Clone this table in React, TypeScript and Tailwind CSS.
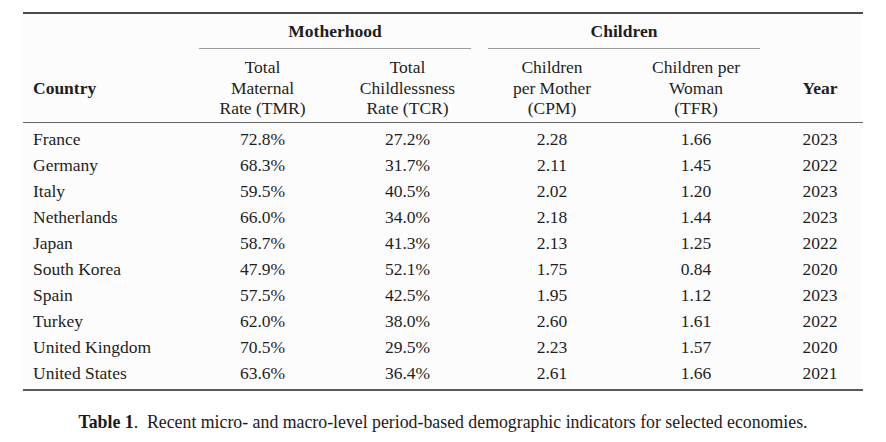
const rows: [string, string, string, string, string, string][] = [
  ['France', '72.8%', '27.2%', '2.28', '1.66', '2023'],
  ['Germany', '68.3%', '31.7%', '2.11', '1.45', '2022'],
  ['Italy', '59.5%', '40.5%', '2.02', '1.20', '2023'],
  ['Netherlands', '66.0%', '34.0%', '2.18', '1.44', '2023'],
  ['Japan', '58.7%', '41.3%', '2.13', '1.25', '2022'],
  ['South Korea', '47.9%', '52.1%', '1.75', '0.84', '2020'],
  ['Spain', '57.5%', '42.5%', '1.95', '1.12', '2023'],
  ['Turkey', '62.0%', '38.0%', '2.60', '1.61', '2022'],
  ['United Kingdom', '70.5%', '29.5%', '2.23', '1.57', '2020'],
  ['United States', '63.6%', '36.4%', '2.61', '1.66', '2021'],
]

// column widths: country | TMR | TCR | CPM | TFR | year
const cols = 'grid grid-cols-[167px_145px_145px_144px_144px_98px]'

export default function App() {
  return (
    <div className="w-[886px] h-[442px] bg-white text-[#1e1e1e] [font-family:'Liberation_Serif',serif] overflow-hidden">
      <div className="pt-[12px] px-[20px]">
        {/* table */}
        <div className="mx-[3px] bg-[#fcfcfc] border-t-2 border-b-2 border-t-[#4a4a4a] border-b-[#5a5a5a] text-[17.5px]">
          {/* group header */}
          <div className={cols + ' pt-[7px]'}>
            <div />
            <div className="col-span-2 px-[9px]">
              <div className="text-center font-bold leading-[20px]">Motherhood</div>
              <div className="mt-[7px] border-t border-[#9a9a9a]" />
            </div>
            <div className="col-span-2 px-[8px]">
              <div className="text-center font-bold leading-[20px]">Children</div>
              <div className="mt-[7px] border-t border-[#9a9a9a]" />
            </div>
            <div />
          </div>

          {/* column header */}
          <div className={cols + ' mt-[8px] pb-[3px] leading-[20.5px] border-b-[1.5px] border-[#666]'}>
            <div className="pl-[10px] font-bold flex items-center">Country</div>
            <div className="text-center">
              Total<br />Maternal<br />Rate (TMR)
            </div>
            <div className="text-center">
              Total<br />Childlessness<br />Rate (TCR)
            </div>
            <div className="text-center">
              Children<br />per Mother<br />(CPM)
            </div>
            <div className="text-center">
              Children per<br />Woman<br />(TFR)
            </div>
            <div className="pl-[6px] font-bold flex items-center justify-center">Year</div>
          </div>

          {/* body */}
          <div className="pt-[3px] pb-[3px]">
            {rows.map((r) => (
              <div key={r[0]} className={cols + ' leading-[26px]'}>
                <div className="pl-[10px]">{r[0]}</div>
                <div className="text-center">{r[1]}</div>
                <div className="text-center">{r[2]}</div>
                <div className="text-center">{r[3]}</div>
                <div className="text-center">{r[4]}</div>
                <div className="pl-[6px] text-center">{r[5]}</div>
              </div>
            ))}
          </div>
        </div>

        {/* caption */}
        <p className="mt-[21px] text-center text-[17.8px] leading-[20px] text-[#1a1a1a] whitespace-nowrap">
          <span className="font-bold">Table 1</span>.&nbsp; Recent micro- and macro-level period-based demographic
          indicators for selected economies.
        </p>
      </div>
    </div>
  )
}
